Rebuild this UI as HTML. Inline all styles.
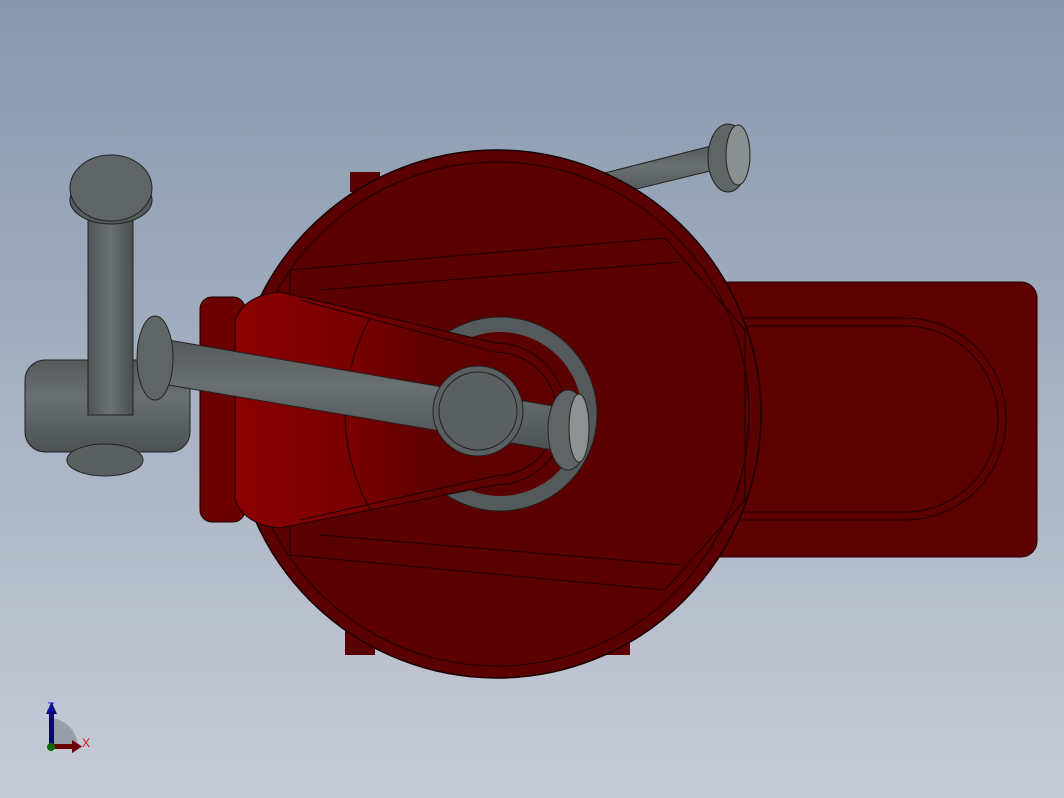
<!DOCTYPE html>
<html><head><style>html,body{margin:0;padding:0;width:1064px;height:798px;overflow:hidden}
svg{display:block}</style></head><body>
<svg width="1064" height="798" viewBox="0 0 1064 798" xmlns="http://www.w3.org/2000/svg">
<defs>
<linearGradient id="bg" x1="0" y1="0" x2="0" y2="1"><stop offset="0" stop-color="#8798ae"/><stop offset="1" stop-color="#c7cbd7"/></linearGradient>
<linearGradient id="armg" x1="0" y1="0" x2="1" y2="0"><stop offset="0" stop-color="#8a0000"/><stop offset="0.35" stop-color="#7a0000"/><stop offset="0.6" stop-color="#5e0000"/></linearGradient>
<linearGradient id="rodv" x1="0" y1="0" x2="1" y2="0"><stop offset="0" stop-color="#4e5455"/><stop offset="0.5" stop-color="#6b7172"/><stop offset="1" stop-color="#4a5051"/></linearGradient>
<linearGradient id="rodh" x1="0" y1="0" x2="0" y2="1"><stop offset="0" stop-color="#55595a"/><stop offset="0.4" stop-color="#6a7071"/><stop offset="1" stop-color="#4c5253"/></linearGradient>
</defs>
<rect width="1064" height="798" fill="url(#bg)"/>
<!-- upper right rod -->
<polygon points="585,178 715,145 722,168 592,200" fill="url(#rodh)" stroke="#222" stroke-width="1"/>
<ellipse cx="728" cy="158" rx="20" ry="34" fill="#5f6566" stroke="#222"/>
<ellipse cx="738" cy="155" rx="12" ry="30" fill="#8a8f90" stroke="#222"/>
<!-- body tabs -->
<rect x="350" y="172" width="30" height="20" fill="#5a0000"/>
<rect x="345" y="630" width="30" height="25" fill="#5a0000"/>
<rect x="600" y="630" width="30" height="25" fill="#5a0000"/>
<rect x="640" y="282" width="397" height="275" rx="16" fill="#5c0000" stroke="#200" stroke-width="1"/>
<path d="M730 318 H905 A95 95 0 0 1 905 520 H730 Z" fill="none" stroke="#1a0000" stroke-width="1"/>
<path d="M735 326 H905 A88 88 0 0 1 905 512 H735" fill="none" stroke="#1a0000" stroke-width="1"/>
<circle cx="497" cy="414" r="264" fill="#5a0000" stroke="#1a0000" stroke-width="1.5"/>
<circle cx="497" cy="414" r="252" fill="none" stroke="#1a0000" stroke-width="1"/>
<polygon points="290,270 665,238 745,330 745,500 665,590 290,555" fill="none" stroke="#1a0000" stroke-width="1"/>
<line x1="320" y1="290" x2="680" y2="262" stroke="#1a0000"/>
<line x1="320" y1="535" x2="680" y2="565" stroke="#1a0000"/>
<rect x="200" y="297" width="45" height="225" rx="12" fill="#6a0000" stroke="#1a0000"/>
<!-- ring -->
<circle cx="500" cy="414" r="97" fill="#545a5b" stroke="#222"/>
<circle cx="500" cy="414" r="82" fill="#5a0000"/>
<!-- arm -->
<path d="M235 320 Q245 295 280 292 L495 343 A71 71 0 0 1 495 485 L280 528 Q245 525 235 500 Z" fill="url(#armg)" stroke="#1a0000" stroke-width="1"/>
<path d="M300 300 L495 352 A62 62 0 0 1 495 476 L300 520" fill="none" stroke="#1a0000"/>
<path d="M370 318 Q320 414 370 510" fill="none" stroke="#1a0000"/>
<!-- left cylinder -->
<rect x="25" y="360" width="165" height="92" rx="20" fill="url(#rodh)" stroke="#222"/>
<ellipse cx="105" cy="460" rx="38" ry="16" fill="#5a6061" stroke="#222"/>
<rect x="88" y="190" width="45" height="225" fill="url(#rodv)" stroke="#222"/>
<ellipse cx="111" cy="200" rx="41" ry="24" fill="#555b5c" stroke="#222"/>
<ellipse cx="111" cy="188" rx="41" ry="33" fill="#5f6566" stroke="#222"/>
<!-- main rod -->
<polygon points="168,340 565,408 565,452 168,385" fill="url(#rodh)" stroke="#222"/>
<ellipse cx="155" cy="358" rx="18" ry="42" fill="#5f6566" stroke="#222"/>
<circle cx="478" cy="411" r="45" fill="#5a6061" stroke="#222"/>
<circle cx="478" cy="411" r="39" fill="none" stroke="#222"/>
<ellipse cx="568" cy="430" rx="20" ry="40" fill="#5f6566" stroke="#222"/>
<ellipse cx="579" cy="428" rx="10" ry="34" fill="#8d9293" stroke="#222"/>
<!-- triad -->
<path d="M52 748 L52 718 A30 30 0 0 1 78 746 Z" fill="#9a9ea6"/>
<rect x="49" y="712" width="5" height="36" fill="#0a0a70"/>
<polygon points="46,714 51.5,702 57,714" fill="#0a0a70"/>
<rect x="50" y="744" width="24" height="5" fill="#6b0000"/>
<polygon points="72,740 82,746.5 72,753" fill="#6b0000"/>
<circle cx="51" cy="747" r="4" fill="#0a6a0a"/>
<text x="47" y="711" font-family="Liberation Sans, sans-serif" font-size="12" fill="#1010e0">Z</text>
<text x="82" y="747" font-family="Liberation Sans, sans-serif" font-size="12" fill="#e01010">X</text>
</svg>
</body></html>
